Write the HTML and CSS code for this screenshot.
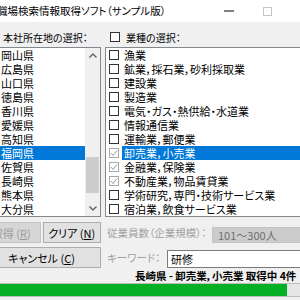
FILE: index.html
```html
<!DOCTYPE html>
<html>
	<head>
		<meta charset="utf-8">
		<title>職場検索情報取得ソフト</title>
		<link rel="stylesheet" href="styles.css">
	</head>
	<body>
		<div class="window">
			<div class="titlebar">
				<span class="title">職場検索情報取得ソフト（サンプル版）</span>
				<span class="ctl"><svg width="10" height="2"><line x1="0" y1="1" x2="10" y2="1" stroke="#000" stroke-width="1"/></svg></span>
				<span class="ctl"><span class="maxbox"></span></span>
				<span class="ctl"></span>
			</div>
			<div class="client">
				<div class="panes">
					<div class="left">
						<div class="label">本社所在地の選択：</div>
						<div class="listbox">
							<ul class="items">
								<li>岡山県</li>
								<li>広島県</li>
								<li>山口県</li>
								<li>徳島県</li>
								<li>香川県</li>
								<li>愛媛県</li>
								<li>高知県</li>
								<li class="sel">福岡県</li>
								<li>佐賀県</li>
								<li>長崎県</li>
								<li>熊本県</li>
								<li>大分県</li>
							</ul>
							<div class="scroll">
								<div class="arrow"><svg width="8" height="5"><polyline points="0.5,4.5 4,1 7.5,4.5" fill="none" stroke="#606060" stroke-width="1.4"/></svg></div>
								<div class="track"><div class="thumb"></div></div>
								<div class="arrow"><svg width="8" height="5"><polyline points="0.5,0.5 4,4 7.5,0.5" fill="none" stroke="#606060" stroke-width="1.4"/></svg></div>
							</div>
						</div>
					</div>
					<div class="right">
						<div class="label"><span class="box"></span>業種の選択：</div>
						<div class="listbox">
							<ul class="items checks">
								<li><span class="box"></span><span class="txt">漁業</span></li>
								<li><span class="box"></span><span class="txt">鉱業，採石業，砂利採取業</span></li>
								<li><span class="box"></span><span class="txt">建設業</span></li>
								<li><span class="box"></span><span class="txt">製造業</span></li>
								<li><span class="box"></span><span class="txt">電気・ガス・熱供給・水道業</span></li>
								<li><span class="box"></span><span class="txt">情報通信業</span></li>
								<li><span class="box"></span><span class="txt">運輸業，郵便業</span></li>
								<li class="sel"><span class="box on"><svg width="8" height="8"><polyline points="1,4 3,6.5 7,1.5" fill="none" stroke="#999" stroke-width="1"/></svg></span><span class="txt">卸売業，小売業</span></li>
								<li><span class="box on"><svg width="8" height="8"><polyline points="1,4 3,6.5 7,1.5" fill="none" stroke="#999" stroke-width="1"/></svg></span><span class="txt">金融業，保険業</span></li>
								<li><span class="box on"><svg width="8" height="8"><polyline points="1,4 3,6.5 7,1.5" fill="none" stroke="#999" stroke-width="1"/></svg></span><span class="txt">不動産業，物品賃貸業</span></li>
								<li><span class="box"></span><span class="txt">学術研究，専門・技術サービス業</span></li>
								<li><span class="box"></span><span class="txt">宿泊業，飲食サービス業</span></li>
							</ul>
						</div>
					</div>
				</div>
				<div class="lower">
					<div class="btns">
						<div class="btnrow">
							<button class="btn" disabled>取得 (<u>R</u>)</button>
							<button class="btn">クリア (<u>N</u>)</button>
						</div>
						<button class="btn">キャンセル (<u>C</u>)</button>
					</div>
					<div class="fields">
						<div class="field">
							<span class="flabel size">従業員数（企業規模）：</span>
							<span class="combo">101〜300人</span>
						</div>
						<div class="field">
							<span class="flabel kw">キーワード：</span>
							<span class="textbox">研修</span>
						</div>
					</div>
				</div>
				<div class="status">長崎県 - 卸売業，小売業 取得中 4件</div>
				<div class="progress"><div class="fill" style="width:300px"></div></div>
			</div>
		</div>
	</body>
</html>
```

FILE: styles.css
```css
*{
	box-sizing:border-box;
}
html,body{
	margin:0;
	height:300px;
	overflow:hidden;
	background:#f0f0f0;
}
body{
	font-family:"Noto Sans CJK JP",sans-serif;
	font-feature-settings:"palt";
	color:#000;
}
.window{
	width:342px;
	margin-left:-18px;
}
.titlebar{
	display:flex;
	align-items:center;
	height:22px;
	background:#fff;
}
.title{
	flex:1;
	padding-left:15px;
	font-size:10.5px;
	line-height:20px;
	white-space:nowrap;
}
.ctl{
	flex:none;
	width:38px;
	height:22px;
	display:flex;
	align-items:center;
	justify-content:center;
}
.maxbox{
	width:9px;
	height:9px;
	border:1px solid #c4c4c4;
}
.client{
	padding-top:7px;
}
.panes{
	display:flex;
	gap:4px;
}
.left{
	width:119px;
}
.right{
	width:219px;
}
.label{
	display:flex;
	align-items:center;
	height:16px;
	margin-bottom:2px;
	font-size:10px;
	white-space:nowrap;
}
.left .label{
	padding-left:21px;
}
.right .label{
	padding-left:5px;
}
.right .label .box{
	margin-right:6px;
}
.listbox{
	display:flex;
	height:170px;
	border:1px solid #828790;
	background:#fff;
	overflow:hidden;
}
.left .listbox{
	margin-left:15px;
}
.items{
	flex:1;
	list-style:none;
	margin:0;
	padding:0;
	font-size:11px;
}
.items li{
	height:14px;
	line-height:14px;
	padding-left:3px;
	white-space:nowrap;
}
.items li.sel{
	background:#0078d7;
	color:#fff;
}
.checks li{
	display:flex;
	align-items:center;
}
.checks li.sel{
	background:none;
}
.box{
	flex:none;
	width:10px;
	height:10px;
	border:1px solid #333;
	background:#fff;
	display:flex;
	align-items:center;
	justify-content:center;
}
.box.on{
	border-color:#a8a8a8;
}
.checks .txt{
	flex:1;
	margin-left:3px;
	padding-left:2px;
	line-height:14px;
}
.checks li.sel .txt{
	background:#0078d7;
	color:#fff;
}
.scroll{
	flex:none;
	width:15px;
	display:flex;
	flex-direction:column;
	background:#f0f0f0;
}
.arrow{
	height:15px;
	display:flex;
	align-items:center;
	justify-content:center;
}
.track{
	flex:1;
	padding:94px 1px 0 1px;
}
.thumb{
	height:36px;
	background:#cdcdcd;
}
.lower{
	display:flex;
	gap:6px;
	margin-top:5px;
}
.btns{
	width:119px;
	display:flex;
	flex-direction:column;
	gap:4px;
}
.btnrow{
	display:flex;
	gap:2px;
}
.btn{
	flex:1;
	height:21px;
	padding:0;
	border:1px solid #adadad;
	background:#e1e1e1;
	font-family:inherit;
	font-feature-settings:"palt";
	font-size:11px;
	color:#000;
	white-space:nowrap;
}
.btn:disabled{
	background:#d6d6d6;
	border-color:#c4c4c4;
	color:#9a9a9a;
}
.fields{
	flex:1;
	display:flex;
	flex-direction:column;
	gap:4px;
}
.field{
	display:flex;
	align-items:center;
	height:21px;
}
.flabel{
	flex:none;
	font-size:10.5px;
	color:#a0a0a0;
	white-space:nowrap;
}
.flabel.size{
	width:105px;
}
.flabel.kw{
	width:60px;
}
.combo{
	flex:1;
	height:16px;
	margin-top:4px;
	padding-left:5px;
	border:1px solid #c4c4c4;
	background:#cccccc;
	color:#6d6d6d;
	font-size:11px;
	line-height:14px;
}
.textbox{
	flex:1;
	height:18px;
	margin-top:3px;
	padding-left:3px;
	border:1px solid #7a7a7a;
	background:#fff;
	font-size:11px;
	line-height:16px;
}
.status{
	margin-top:2px;
	padding-left:153px;
	height:12px;
	line-height:12px;
	font-size:10.5px;
	font-weight:bold;
	white-space:nowrap;
}
.progress{
	margin:1px 0 0 4px;
	width:330px;
	height:14px;
	border:1px solid #bcbcbc;
	background:#e6e6e6;
}
.fill{
	height:100%;
	background:#06b025;
}
```
